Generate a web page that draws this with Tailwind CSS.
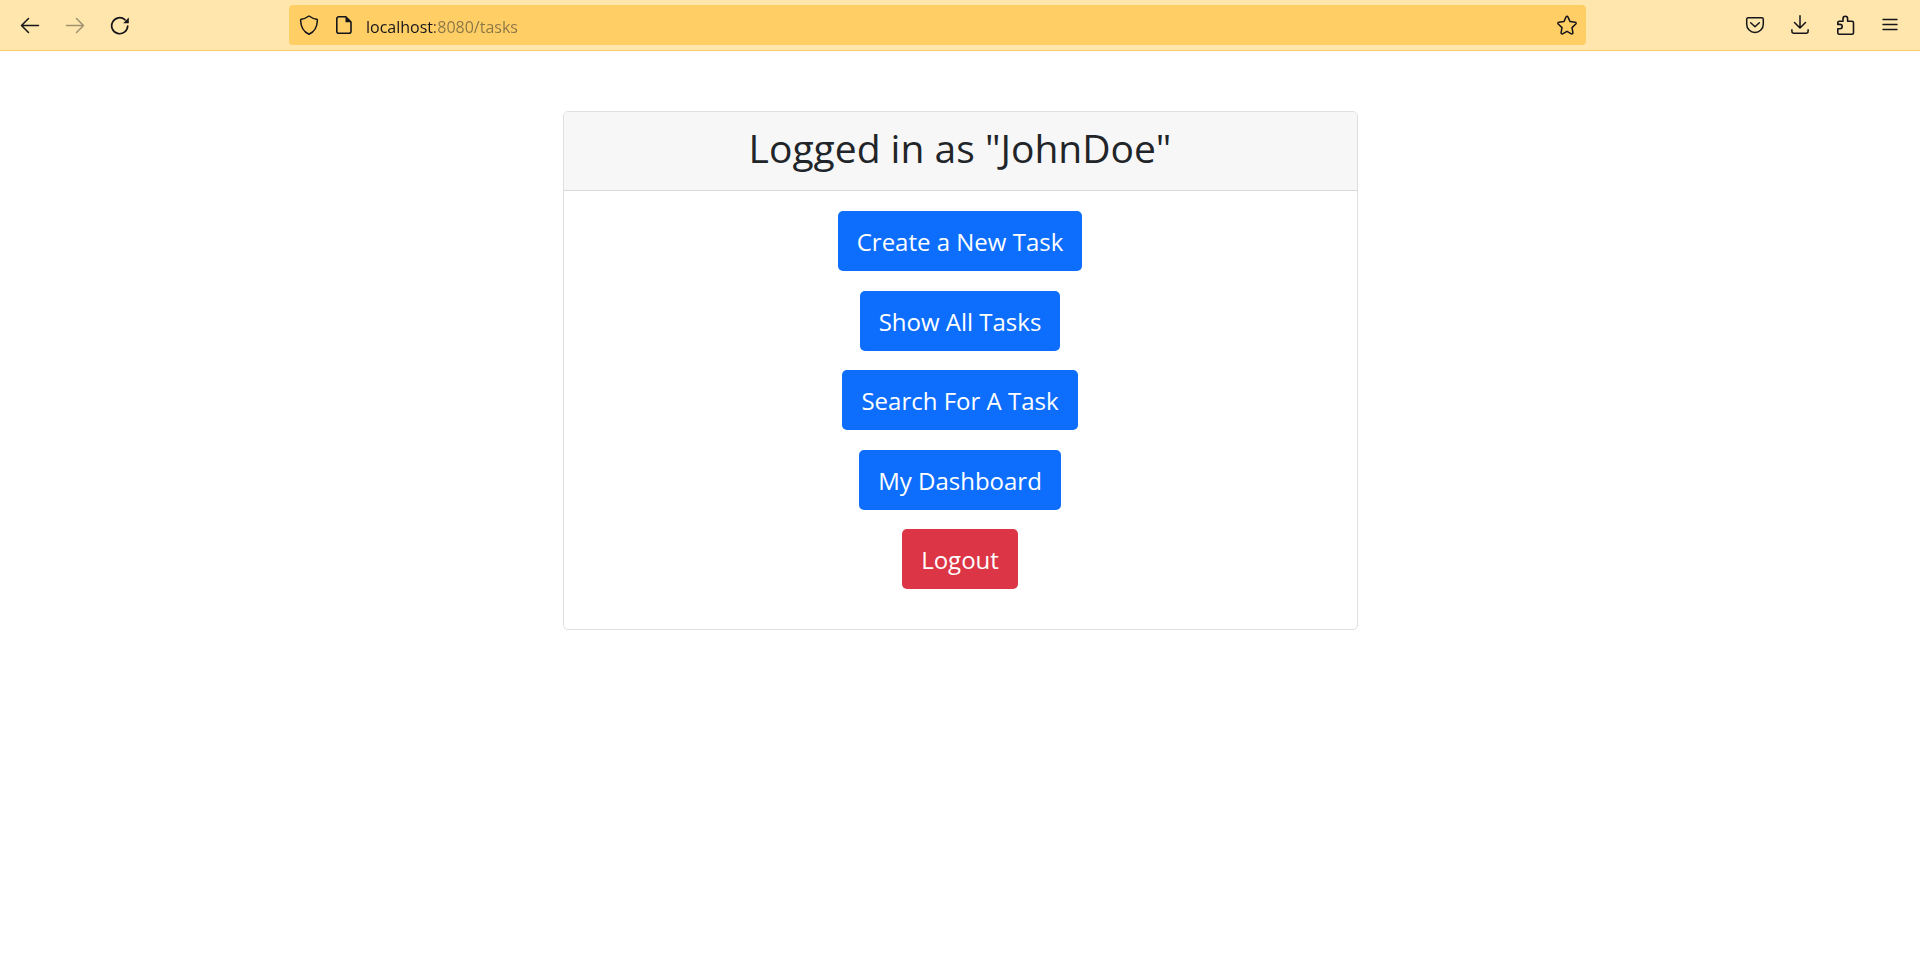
<!DOCTYPE html>
<html lang="en">
<head>
<meta charset="utf-8">
<meta name="viewport" content="width=device-width, initial-scale=1">
<title>Tasks</title>
<script src="https://cdn.jsdelivr.net/npm/@tailwindcss/browser@4"></script>
</head>
<body class="min-h-screen bg-white font-['Open_Sans','Noto_Sans',sans-serif] text-[#212529]">
  <header class="flex h-[51px] items-center border-b border-[#ffcf66] bg-[#ffe6ac] text-[#15141a]">
    <nav aria-label="History" class="flex w-[289px] shrink-0 pl-[7px]">
      <button type="button" aria-label="Back" class="flex h-10 w-[45px] items-center justify-center">
        <svg class="size-5" viewBox="0 0 20 20" fill="none" stroke="currentColor" stroke-width="1.5" stroke-linecap="round" stroke-linejoin="round"><path d="M18.5 10.5H2M8.5 3.5l-7 7 7 7"/></svg>
      </button>
      <button type="button" aria-label="Forward" disabled class="flex h-10 w-[45px] items-center justify-center opacity-40">
        <svg class="size-5" viewBox="0 0 20 20" fill="none" stroke="currentColor" stroke-width="1.5" stroke-linecap="round" stroke-linejoin="round"><path d="M1.500 10.500H18M11.500 3.500l7 7-7 7"/></svg>
      </button>
      <button type="button" aria-label="Reload" class="flex h-10 w-[45px] items-center justify-center">
        <svg class="size-5" viewBox="0 0 20 20" fill="none" stroke="currentColor" stroke-width="1.7" stroke-linecap="round"><path d="M17.700 11a8 8 0 1 1-2.600-6.200"/><path d="M18.800 2.600v5.600h-5.600z" fill="currentColor" stroke="none"/></svg>
      </button>
    </nav>
    <div class="flex h-10 min-w-0 flex-1 items-center rounded bg-[#ffcf66]">
      <button type="button" aria-label="Tracking protection" class="ml-2.5 flex size-5 shrink-0 items-center justify-center">
        <svg class="size-5" viewBox="0 0 20 20" fill="none" stroke="currentColor" stroke-width="1.500" stroke-linejoin="round"><path d="M10 1c2.400 1.700 5 2.900 7.700 3.300.5.100.7.400.7.900C18.200 12 15 17 10 19.200 5 17 1.800 12 1.600 5.200c0-.5.200-.8.700-.9C5 3.900 7.600 2.700 10 1z"/></svg>
      </button>
      <button type="button" aria-label="Site information" class="ml-[15px] flex size-5 shrink-0 items-center justify-center">
        <svg class="size-5" viewBox="0 0 20 20" fill="none" stroke="currentColor" stroke-width="1.600" stroke-linejoin="round"><path d="M4.800 1.800h7L17 7v9.200a2 2 0 0 1-2 2H4.800a2 2 0 0 1-2-2V3.800a2 2 0 0 1 2-2z"/><path d="M11.500 2v5.200H17z" fill="currentColor" stroke="none"/></svg>
      </button>
      <input type="text" aria-label="Address" value="localhost:8080/tasks" class="ml-3 h-10 min-w-0 flex-1 bg-[linear-gradient(to_right,#15141a_69px,#8a7547_69px)] bg-clip-text pt-[3px] text-base text-transparent outline-none">
      <button type="button" aria-label="Bookmark this page" class="mr-[9px] flex size-5 shrink-0 items-center justify-center">
        <svg class="size-5" viewBox="0 0 20 20" fill="none" stroke="currentColor" stroke-width="1.500" stroke-linejoin="round"><path d="M10 1.300c.4 0 .7.300.9.600l2.200 4.700 5.100.7c.9.100 1.200 1.100.6 1.700l-3.800 3.600.9 5.100c.1.900-.7 1.500-1.500 1.100L10 16.300l-4.400 2.500c-.8.400-1.600-.2-1.500-1.100l.9-5.100L1.200 9C.6 8.400.9 7.400 1.800 7.300l5.100-.7 2.200-4.700c.2-.3.500-.6.9-.6z"/></svg>
      </button>
    </div>
    <nav aria-label="Browser tools" class="flex w-[334px] shrink-0 justify-end pr-2">
      <button type="button" aria-label="Save to Pocket" class="flex h-10 w-[45px] items-center justify-center">
        <svg class="size-5" viewBox="0 0 20 20" fill="none" stroke="currentColor" stroke-width="1.500" stroke-linecap="round" stroke-linejoin="round"><path d="M3.200 2.800h13.600a1.500 1.500 0 0 1 1.500 1.500v4.900a8.300 8.300 0 0 1-16.600 0V4.300a1.500 1.500 0 0 1 1.500-1.500z"/><path d="M5.700 7.700l4.300 4 4.300-4"/></svg>
      </button>
      <button type="button" aria-label="Downloads" class="flex h-10 w-[45px] items-center justify-center">
        <svg class="size-5" viewBox="0 0 20 20" fill="none" stroke="currentColor" stroke-width="1.500" stroke-linecap="round" stroke-linejoin="round"><path d="M10 .8v12M4.500 7.500l5.500 5.500 5.500-5.500M1.900 14.800v1.400a2 2 0 0 0 2 2h12.200a2 2 0 0 0 2-2v-1.400"/></svg>
      </button>
      <button type="button" aria-label="Extensions" class="flex h-10 w-[45px] items-center justify-center">
        <svg class="size-5" viewBox="0 0 20 20" fill="none" stroke="currentColor" stroke-width="1.600" stroke-linejoin="round"><path d="M4.300 6.200h3.700V3.500a2.300 2.300 0 0 1 4.600 0v2.700h4.400a1.500 1.500 0 0 1 1.500 1.500v10a1.500 1.500 0 0 1-1.500 1.500H4.300a1.500 1.500 0 0 1-1.500-1.500v-3.900h2.200a2.200 2.200 0 0 0 0-4.400H2.800V7.700a1.500 1.500 0 0 1 1.500-1.500z"/></svg>
      </button>
      <button type="button" aria-label="Menu" class="flex h-10 w-[45px] items-center justify-center">
        <svg class="size-5" viewBox="0 0 20 20" fill="none" stroke="currentColor" stroke-width="1.400" stroke-linecap="round"><path d="M3 4.500h14M3 9.500h14M3 14.500h14"/></svg>
      </button>
    </nav>
  </header>

  <main class="px-4 pt-[60px]">
    <section class="mx-auto max-w-[795px] overflow-hidden rounded-[5px] border border-[#dfdfdf] bg-white">
      <div class="border-b border-[#d8d8d8] bg-[#f7f7f7] px-5 pt-3 pb-[18px]">
        <h1 class="text-center text-[39px] leading-12">Logged in as "JohnDoe"</h1>
      </div>
      <div class="px-5 pt-5 pb-10">
        <div class="flex min-h-[378px] flex-col items-center justify-between text-2xl text-white">
          <button type="button" class="h-[60px] rounded-[5px] bg-[#0d6efd] px-[19px] pt-0.5">Create a New Task</button>
          <button type="button" class="h-[60px] rounded-[5px] bg-[#0d6efd] px-[19px] pt-0.5">Show All Tasks</button>
          <button type="button" class="h-[60px] rounded-[5px] bg-[#0d6efd] px-[19px] pt-0.5">Search For A Task</button>
          <button type="button" class="h-[60px] rounded-[5px] bg-[#0d6efd] px-[19px] pt-0.5">My Dashboard</button>
          <button type="button" class="h-[60px] rounded-[5px] bg-[#dc3545] px-[19px] pt-0.5">Logout</button>
        </div>
      </div>
    </section>
  </main>
</body>
</html>
